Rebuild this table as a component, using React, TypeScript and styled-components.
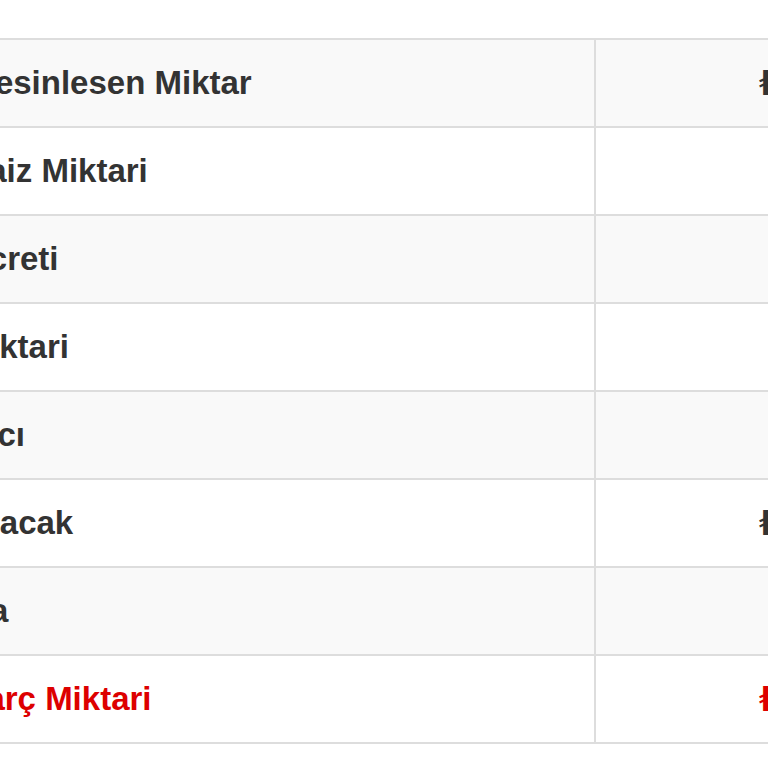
import React from "react";
import styled, { createGlobalStyle } from "styled-components";

const Global = createGlobalStyle`
  html, body {
    margin: 0;
    padding: 0;
    background: #ffffff;
  }
  body {
    font-family: "Liberation Sans", Arial, "DejaVu Sans", sans-serif;
  }
`;

const Viewport = styled.div`
  width: 768px;
  height: 768px;
  overflow: hidden;
  padding-top: 38px;
  box-sizing: border-box;
  background: #ffffff;
`;

const Table = styled.div`
  display: grid;
  grid-template-columns: 761px 363px;
  margin-left: -165px;
  width: max-content;
  border-top: 2px solid #dddddd;
`;

const Row = styled.div<{ $striped: boolean }>`
  display: contents;

  & > div {
    background: ${(p) => (p.$striped ? "#f9f9f9" : "#ffffff")};
  }
`;

const Cell = styled.div<{ $align: "left" | "right"; $danger?: boolean }>`
  height: 88px;
  box-sizing: border-box;
  border-bottom: 2px solid #dddddd;
  display: flex;
  align-items: center;
  justify-content: ${(p) => (p.$align === "right" ? "flex-end" : "flex-start")};
  padding: 0 12px;
  font-size: 33px;
  font-weight: 700;
  white-space: nowrap;
  color: ${(p) => (p.$danger ? "#dd0000" : "#333333")};
`;

const LabelCell = styled(Cell)`
  border-right: 2px solid #dddddd;
`;

const ValueCell = styled(Cell)``;

type Item = { label: string; value: string; danger?: boolean };

const rows: Item[] = [
  { label: "Toplam Kesinlesen Miktar", value: "₺125.430,00" },
  { label: "İşlemiş Faiz Miktari", value: "₺8.450,00" },
  { label: "Avukat Ücreti", value: "₺9.200,00" },
  { label: "Masraf Miktari", value: "₺5.000,00" },
  { label: "Karar Harcı", value: "₺2.140,00" },
  { label: "Güncel Alacak", value: "₺148.220,00" },
  { label: "Nakit Para", value: "₺1.500,00" },
  { label: "Bakiye Harç Miktari", value: "₺146.720,00", danger: true },
];

export default function App() {
  return (
    <>
      <Global />
      <Viewport>
        <Table>
          {rows.map((r, i) => (
            <Row key={r.label} $striped={i % 2 === 0}>
              <LabelCell $align="left" $danger={r.danger}>
                {r.label}
              </LabelCell>
              <ValueCell $align="right" $danger={r.danger}>
                {r.value}
              </ValueCell>
            </Row>
          ))}
        </Table>
      </Viewport>
    </>
  );
}
